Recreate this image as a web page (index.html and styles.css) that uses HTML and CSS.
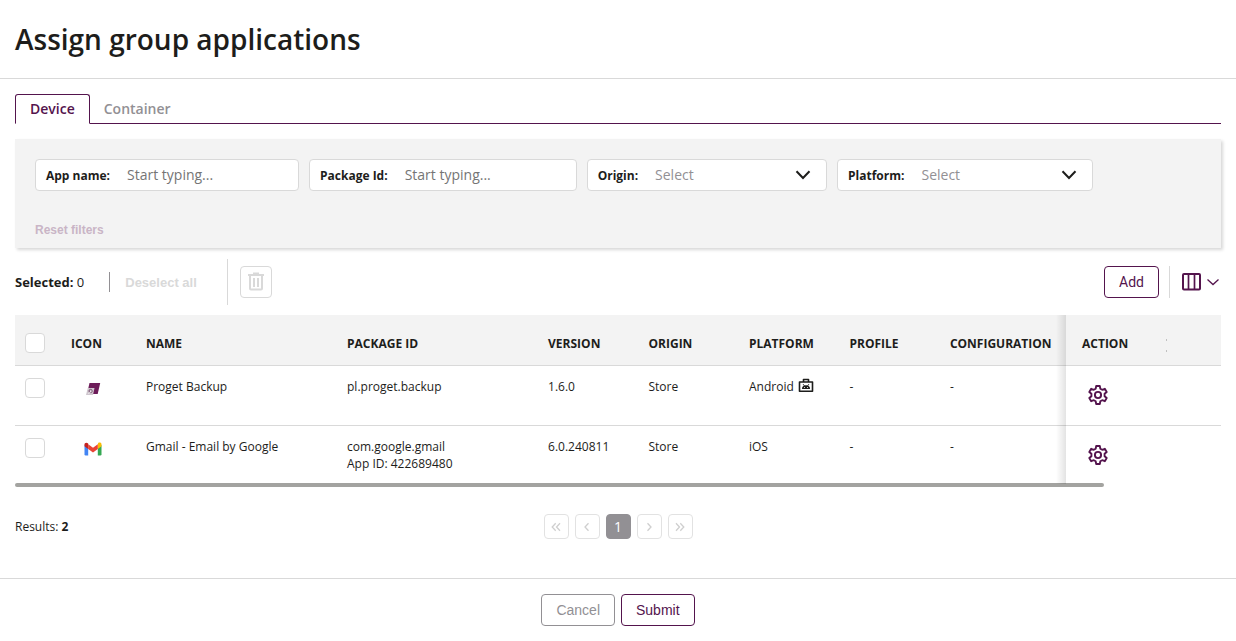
FILE: index.html
```html
<!DOCTYPE html>
<html lang="en">
<head>
<meta charset="utf-8">
<title>Assign group applications</title>
<link rel="stylesheet" href="styles.css">
</head>
<body>
<svg class="sprite" aria-hidden="true">
  <symbol id="gear" viewBox="0 0 20 20"><g fill="none" stroke="currentColor" stroke-width="1.9" stroke-linejoin="round"><path d="M8.2 1h3.6l.5 2.7 1.9 1.1 2.6-1 1.9 3.2-2.1 1.8v2.4l2.1 1.8-1.9 3.2-2.6-1-1.9 1.1-.5 2.7H8.2l-.5-2.7-1.9-1.1-2.6 1L1.300 13l2.100-1.800V8.800L1.300 7l1.900-3.200 2.600 1 1.900-1.100z"/><circle cx="10" cy="10" r="3.100"/></g></symbol>
  <symbol id="chevron" viewBox="0 0 16 10"><path d="M1.500 1.200 8 8l6.500-6.800" fill="none" stroke="currentColor" stroke-width="2"/></symbol>
  <symbol id="angle" viewBox="0 0 10 10"><path d="M6.500 1.200 3 5l3.500 3.800" fill="none" stroke="currentColor" stroke-width="1.300"/></symbol>
  <symbol id="angles" viewBox="0 0 10 10"><path d="M4.700 1.200 1.200 5l3.500 3.800M9 1.200 5.500 5 9 8.800" fill="none" stroke="currentColor" stroke-width="1.300"/></symbol>
</svg>
<header class="title-bar"><h1 class="title">Assign group applications</h1></header>
<main class="content">
  <nav class="tabs" role="tablist">
    <button class="tab tab-active" type="button" role="tab" aria-selected="true">Device</button>
    <button class="tab" type="button" role="tab" aria-selected="false">Container</button>
  </nav>
  <form class="filters">
    <div class="filter-row">
      <div class="filter"><label class="filter-label" for="app">App name:</label><input class="filter-input" id="app" type="text" placeholder="Start typing..."></div>
      <div class="filter"><label class="filter-label" for="pkg">Package Id:</label><input class="filter-input" id="pkg" type="text" placeholder="Start typing..."></div>
      <div class="filter"><label class="filter-label" for="origin">Origin:</label><select class="filter-input filter-select" id="origin"><option>Select</option></select><svg class="filter-chevron"><use href="#chevron"/></svg></div>
      <div class="filter"><label class="filter-label" for="platform">Platform:</label><select class="filter-input filter-select" id="platform"><option>Select</option></select><svg class="filter-chevron"><use href="#chevron"/></svg></div>
    </div>
    <button class="reset" type="reset">Reset filters</button>
  </form>
  <div class="toolbar">
    <div class="selected"><b>Selected:</b> 0</div>
    <button class="deselect" type="button" disabled>Deselect all</button>
    <div class="bulk">
      <button class="trash" type="button" aria-label="Delete" disabled>
        <svg width="18" height="20" viewBox="0 0 18 20" fill="none" stroke="currentColor" stroke-width="2"><path d="M1 3h16M6 1.500h6M3 4v12.500q0 1 1 1h10q1 0 1-1V4"/><path d="M7 6v9M11 6v9" stroke-width="2"/></svg>
      </button>
    </div>
    <button class="button add" type="button">Add</button>
    <div class="columns-wrap">
      <button class="columns" type="button" aria-label="Columns">
        <svg width="20" height="18" viewBox="0 0 20 18" fill="none" stroke="currentColor" stroke-width="2"><rect x="2" y="1" width="17" height="15.500" rx="1"/><path d="M7.500 1v15M13.500 1v15" stroke-width="1.700"/></svg>
        <svg width="12" height="8" viewBox="0 0 12 8" fill="none" stroke="currentColor" stroke-width="1.300"><path d="M.500 1.500l5.500 5 5.500-5"/></svg>
      </button>
    </div>
  </div>
  <div class="table-wrap">
  <table class="apps">
    <colgroup><col class="c-check"><col class="c-icon"><col class="c-wide"><col class="c-wide"><col class="c-slim"><col class="c-slim"><col class="c-slim"><col class="c-slim"><col><col class="c-action"><col class="c-tail"></colgroup>
    <thead><tr>
      <th><input class="check" type="checkbox" aria-label="Select all"></th><th>ICON</th><th>NAME</th><th>PACKAGE ID</th><th>VERSION</th><th>ORIGIN</th><th>PLATFORM</th><th>PROFILE</th><th>CONFIGURATION</th><th class="action">ACTION</th><th class="tail"></th>
    </tr></thead>
    <tbody>
      <tr>
        <td><input class="check" type="checkbox" aria-label="Select Proget Backup"></td>
        <td class="icon-cell"><svg width="18" height="14" viewBox="0 0 18 14"><path d="M5.500 1H16.200L13.700 12H3z" fill="#6d1c59"/><path d="M3.800 6H10.500L9 13H2z" fill="#cfc6ce"/><circle cx="6.600" cy="9" r="1.600" fill="none" stroke="#77506e"/><path d="M4.500 11.800l3-3" stroke="#fff" stroke-width=".8"/></svg></td>
        <td>Proget Backup</td><td>pl.proget.backup</td><td>1.6.0</td><td>Store</td>
        <td><span class="platform">Android<svg width="16" height="15" viewBox="0 0 16 15"><path d="M5.500 3.500v-2h5v2M1.500 4h13v9.200h-13z" fill="none" stroke="#1d1d1b" stroke-width="1.600" stroke-linejoin="round"/><path d="M4 11a4 3.700 0 0 1 8 0z" fill="#1d1d1b"/><path d="M5 6l1.500 2M11 6L9.500 8" stroke="#1d1d1b" stroke-width=".8"/><circle cx="6.500" cy="9.500" r=".5" fill="#fff"/><circle cx="9.500" cy="9.500" r=".5" fill="#fff"/></svg></span></td>
        <td>-</td><td>-</td>
        <td class="action"><button class="gear" type="button" aria-label="Configure Proget Backup"><svg width="20" height="20"><use href="#gear"/></svg></button></td><td></td>
      </tr>
      <tr>
        <td><input class="check" type="checkbox" aria-label="Select Gmail"></td>
        <td class="icon-cell"><svg width="18" height="14" viewBox="0 0 18 14"><path d="M.500 3v9.300q0 1.200 1.200 1.200h2.500V6z" fill="#4285f4"/><path d="M17.500 3v9.300q0 1.200-1.200 1.200h-2.500V6z" fill="#34a853"/><path d="M13.800 2.500V7l3.700-2.800V2.500C17.500.500 15.500 0 14.200 1z" fill="#fbbc04"/><path d="M4.200 7V2.200L9 5.700l4.800-3.500V7L9 10.500z" fill="#ea4335"/><path d="M.500 2.500v1.700L4.200 7V1.500C2.500 0 .500.700.500 2.500z" fill="#c5221f"/></svg></td>
        <td>Gmail - Email by Google</td><td>com.google.gmail<br>App ID: 422689480</td><td>6.0.240811</td><td>Store</td><td>iOS</td><td>-</td><td>-</td>
        <td class="action"><button class="gear" type="button" aria-label="Configure Gmail"><svg width="20" height="20"><use href="#gear"/></svg></button></td><td></td>
      </tr>
    </tbody>
  </table>
  <div class="scrollbar"><div class="thumb"></div></div>
  </div>
  <div class="results-row">
    <div>Results: <b>2</b></div>
    <nav class="pages" aria-label="Pages">
      <button class="page" type="button" aria-label="First page" disabled><svg class="arrow"><use href="#angles"/></svg></button>
      <button class="page" type="button" aria-label="Previous page" disabled><svg class="arrow"><use href="#angle"/></svg></button>
      <button class="page page-current" type="button">1</button>
      <button class="page" type="button" aria-label="Next page" disabled><svg class="arrow arrow-next"><use href="#angle"/></svg></button>
      <button class="page" type="button" aria-label="Last page" disabled><svg class="arrow arrow-next"><use href="#angles"/></svg></button>
    </nav>
  </div>
</main>
<footer class="footer">
  <button class="button cancel" type="button">Cancel</button>
  <button class="button" type="button">Submit</button>
</footer>
</body>
</html>
```
FILE: styles.css
```css
* { box-sizing: border-box; }
body { margin: 0; color: #1d1d1b; background: #fff; font: 12px/17px "Open Sans", sans-serif; }
button { margin: 0; padding: 0; border: 0; background: none; font-family: "Liberation Sans", Arial, sans-serif; }
.sprite { display: none; }

.title-bar { padding: 20px 15px; border-bottom: 1px solid #d9d9d9; }
.title { margin: 0; font-size: 28px; line-height: 38px; font-weight: 600; }

.content { padding: 15px 15px 0; }
.tabs { display: flex; height: 30px; border-bottom: 1px solid #54144d; }
.tab { height: 30px; padding: 0 14px; border-radius: 3px 3px 0 0; color: #929094; font: 600 14px/28px "Open Sans", sans-serif; }
.tab-active { border: 1px solid #54144d; border-bottom-color: #fff; color: #54144d; background: #fff; }

.filters { margin-top: 15px; padding: 20px 20px 11px; background: #f3f3f3; box-shadow: 2px 2px 3px #d8d8d8; }
.filter-row { display: flex; flex-wrap: wrap; gap: 10px; }
.filter { position: relative; display: flex; align-items: center; gap: 17px; height: 32px; padding: 0 10px; border: 1px solid #d9d9d9; border-radius: 4px; background: #fff; }
.filter-label { font-weight: 700; }
.filter-input { width: 161px; height: 28px; padding: 0 0 1px; border: 0; outline: 0; color: #929094; background: transparent; font: 14px/20px "Open Sans", sans-serif; }
.filter-input::placeholder { color: #757575; }
.filter-select { padding: 0; appearance: none; }
.filter-chevron { position: absolute; right: 15px; width: 16px; height: 10px; pointer-events: none; }
.reset { display: block; margin-top: 32px; color: #c9b5c6; font-size: 12px; line-height: 14px; font-weight: 700; }

.toolbar { display: flex; align-items: center; height: 46px; margin-top: 11px; }
.selected { padding-right: 25px; border-right: 1px solid #929094; font-size: 13px; line-height: 20px; }
.deselect { margin: 0 30px 0 15px; color: #d9d9d9; font-size: 13px; font-weight: 700; }
.bulk { display: flex; align-items: center; height: 46px; padding-left: 12px; border-left: 1px solid #d9d9d9; }
.trash { display: grid; place-items: center; width: 32px; height: 32px; border: 1px solid #d9d9d9; border-radius: 4px; color: #d9d9d9; }
.button { height: 32px; padding: 0 14px; border: 1px solid #54144d; border-radius: 4px; color: #54144d; background: #fff; font-size: 14px; }
.add { margin-left: auto; font-family: Roboto, sans-serif; }
.columns-wrap { display: flex; align-items: center; height: 32px; margin-left: 10px; padding: 0 2px 0 11px; border-left: 1px solid #d9d9d9; }
.columns { display: flex; align-items: center; gap: 6px; color: #54144d; }

.table-wrap { margin-top: 10px; }
.apps { width: 100%; table-layout: fixed; border-collapse: separate; border-spacing: 0; }
.c-check { width: 46px; }
.c-icon { width: 75px; }
.c-wide { width: 16.67%; }
.c-slim { width: 8.33%; }
.c-action { width: 101px; }
.c-tail { width: 54px; }
.apps th { height: 51px; padding: 6px 10px 0; border-bottom: 1px solid #d9d9d9; background: #f3f3f3; font-weight: 700; text-align: left; white-space: nowrap; }
.apps td { height: 60px; padding: 12px 10px 0; border-bottom: 1px solid #d9d9d9; vertical-align: top; }
.apps tbody tr:last-child td { height: 57px; border-bottom: 0; }
.check { display: block; appearance: none; width: 20px; height: 20px; margin: 0; border: 1px solid #d9d9d9; border-radius: 4px; background: #fff; }
.apps .icon-cell { padding: 16px 23px 0; }
.icon-cell svg { display: block; }
.platform { display: flex; gap: 4px; }
.apps .action { position: relative; padding-left: 16px; }
.action::before { content: ""; position: absolute; right: 100%; top: 0; bottom: -1px; width: 10px; background: linear-gradient(to right, rgba(0,0,0,0), rgba(0,0,0,.11)); }
.apps .tail { position: relative; }
.tail::before { content: ""; position: absolute; left: -1px; top: 24px; width: 1px; height: 9px; border: solid #c0c0c0; border-width: 2px 0; }
.gear { display: block; margin: 7px 0 0 6px; height: 20px; color: #54144d; }
.scrollbar { height: 4px; }
.thumb { width: 90.3%; height: 4px; border-radius: 2px; background: #a3a3a0; }

.results-row { display: grid; grid-template-columns: 1fr auto 1fr; align-items: center; margin-top: 27px; }
.pages { display: flex; gap: 6px; }
.page { display: grid; place-items: center; width: 25px; height: 25px; border: 1px solid #e2e2e2; border-radius: 4px; color: #cfcfcf; font: 14px/20px "Open Sans", sans-serif; }
.arrow { width: 10px; height: 10px; }
.arrow-next { transform: scaleX(-1); }
.page-current { border-color: #929094; color: #fff; background: #929094; }
.footer { display: flex; justify-content: center; gap: 6px; margin-top: 39px; padding: 15px; border-top: 1px solid #d9d9d9; }
.cancel { border-color: #929094; color: #929094; }
```
